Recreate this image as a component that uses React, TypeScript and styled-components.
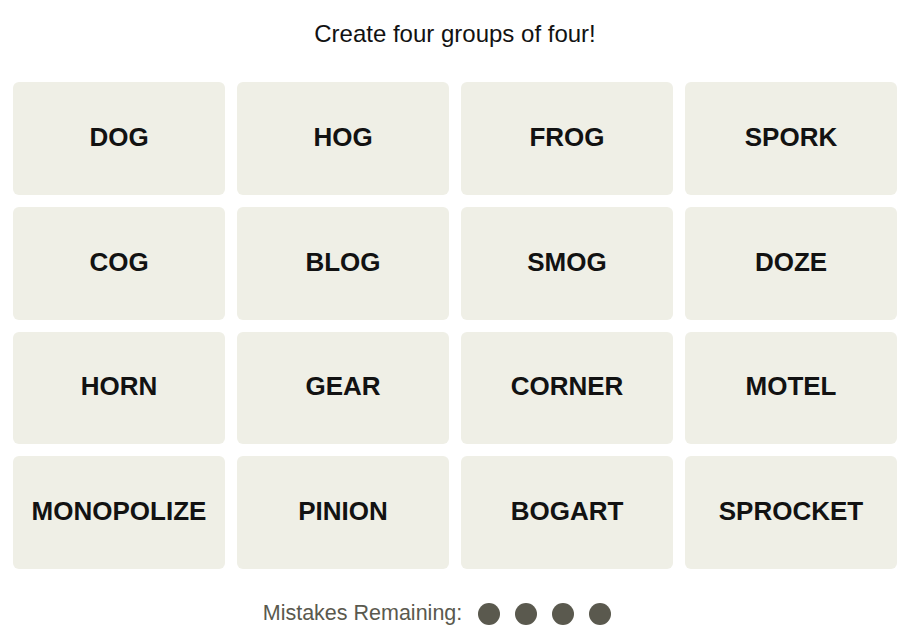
import React from 'react'
import styled, { createGlobalStyle } from 'styled-components'

const words = [
  'DOG', 'HOG', 'FROG', 'SPORK',
  'COG', 'BLOG', 'SMOG', 'DOZE',
  'HORN', 'GEAR', 'CORNER', 'MOTEL',
  'MONOPOLIZE', 'PINION', 'BOGART', 'SPROCKET',
]

const GlobalStyle = createGlobalStyle`
  body {
    margin: 0;
    background: #ffffff;
    font-family: 'Liberation Sans', Arial, sans-serif;
  }
`

export default function App() {
  const mistakesLeft = 4

  return (
    <Page>
      <GlobalStyle />
      <Prompt>Create four groups of four!</Prompt>
      <Board>
        {words.map((word) => (
          <Tile key={word}>{word}</Tile>
        ))}
      </Board>
      <Mistakes>
        Mistakes Remaining:
        <Dots>
          {Array.from({ length: mistakesLeft }).map((_, idx) => (
            <Dot key={idx} />
          ))}
        </Dots>
      </Mistakes>
    </Page>
  )
}

const Page = styled.div`
  width: 910px;
  height: 633px;
  display: flex;
  flex-direction: column;
  align-items: center;
  box-sizing: border-box;
  padding-top: 20px;
`

const Prompt = styled.div`
  font-size: 24px;
  line-height: 28px;
  color: #121212;
`

const Board = styled.div`
  margin-top: 34px;
  width: 884px;
  height: 487px;
  display: grid;
  grid-template-columns: repeat(4, 1fr);
  grid-template-rows: repeat(4, 1fr);
  gap: 12px;
`

const Tile = styled.button`
  border: none;
  border-radius: 6px;
  background-color: #efefe6;
  color: #121212;
  font-family: 'Liberation Sans', Arial, sans-serif;
  font-weight: bold;
  font-size: 26px;
  display: flex;
  align-items: center;
  justify-content: center;
  padding: 0 0 2px;
`

const Mistakes = styled.div`
  margin-top: 32px;
  padding-right: 36px;
  display: flex;
  align-items: center;
  gap: 16px;
  font-size: 21.5px;
  color: #5a594e;
`

const Dots = styled.div`
  display: flex;
  gap: 15px;
`

const Dot = styled.span`
  width: 22px;
  height: 22px;
  border-radius: 50%;
  background-color: #5a594e;
`
